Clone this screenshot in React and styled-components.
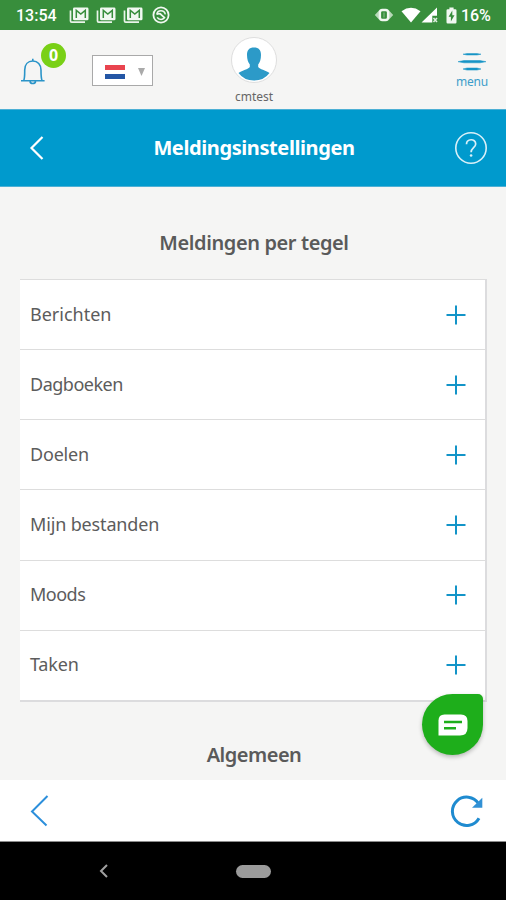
import React from "react";
import styled, { createGlobalStyle } from "styled-components";

const rows = [
    { label: "Berichten", spacing: "0px" },
    { label: "Dagboeken", spacing: "-0.5px" },
    { label: "Doelen", spacing: "-0.2px" },
    { label: "Mijn bestanden", spacing: "-0.15px" },
    { label: "Moods", spacing: "-0.5px" },
    { label: "Taken", spacing: "-0.2px" },
];

const MailIcon = () => (
    <svg width="20" height="17" viewBox="0 0 20 17">
        <path d="M1.5 3.5v10.4q0 1.2 1.2 1.2H16" fill="none" stroke="#e9f4e9" strokeWidth="1.7" />
        <rect x="4" y="0.5" width="15.5" height="12.8" rx="1.4" fill="#f1f8f1" />
        <path d="M7.3 11V3.4l4.5 3.7 4.5-3.7V11" fill="none" stroke="#388e3c" strokeWidth="1.5" />
    </svg>
);

const App = () => {
    return (
        <Screen>
            <GlobalStyle />
            <StatusBar>
                <Clock>13:54</Clock>
                <MailIcons>
                    <MailIcon />
                    <MailIcon />
                    <MailIcon />
                </MailIcons>
                <svg width="18" height="18" viewBox="0 0 18 18">
                    <circle cx="9" cy="9" r="7.6" fill="none" stroke="#f1f8f1" strokeWidth="1.8" />
                    <path d="M4.8 8.6q.4-3.800 4.200-3.800 3.600 0 4.300 3.600M5.200 11.400q1.200 2 3.800 2 2 0 3.200-1.400" fill="none" stroke="#f1f8f1" strokeWidth="1.500" />
                    <path d="M5 8.200q2.600-1.400 4.400.6l3.600 3.400" fill="none" stroke="#f1f8f1" strokeWidth="1.800" />
                </svg>
                <StatusRight>
                    <svg width="20" height="16" viewBox="0 0 20 16">
                        <path d="M5 3.5 0.8 8 5 12.5zM15 3.5 19.2 8 15 12.5z" fill="#b7d9b8" />
                        <rect x="5.9" y="3" width="8.2" height="10" rx="2.5" fill="none" stroke="#f1f8f1" strokeWidth="2.4" />
                        <path d="M10 5.5v5" stroke="#7db680" strokeWidth="1.2" />
                    </svg>
                    <svg width="38" height="16" viewBox="0 0 38 16">
                        <path d="M0.500 4.200Q10 -2.600 19.500 4.200L10 15.400z" fill="#fff" />
                        <path d="M20.500 15.400 36 0.600v8.200h-4.700v6.600z" fill="#fff" />
                        <path d="M32.500 10.900l3.500 4M36 10.900l-3.500 4" stroke="#e0efe0" strokeWidth="1.5" />
                    </svg>
                    <svg width="11" height="17" viewBox="0 0 11 17">
                        <path d="M3.4 0.5h4.2v1.8h1.700q1.200 0 1.200 1.200v11.800q0 1.200-1.200 1.200H1.700q-1.200 0-1.200-1.200V3.500q0-1.200 1.200-1.200h1.700z" fill="#f1f8f1" />
                        <path d="M6.300 3.6 2.600 9.800h2.300v4.600l3.600-6.200H6.300z" fill="#388e3c" />
                    </svg>
                    <Battery>16%</Battery>
                </StatusRight>
            </StatusBar>

            <Header>
                <Side>
                    <Bell>
                        <svg width="26" height="28" viewBox="0 0 26 28">
                            <path d="M3.8 23.2c1-2 .9-5 .9-10.2 0-5.4 3.2-9 8.1-9s8.2 3.6 8.2 9c0 5.2 0 8.2 1 10.2M1 23.700h23.600M10 24.500c.5 2.700 5 2.700 5.600 0M12.800 4V1.700" fill="none" stroke="#2a94c8" strokeWidth="1.600" />
                        </svg>
                        <Badge>0</Badge>
                    </Bell>
                    <Language>
                        <Flag />
                        <svg width="7" height="8" viewBox="0 0 7 8">
                            <path d="M0 0h7L3.500 8z" fill="#aaa" />
                        </svg>
                    </Language>
                </Side>
                <Profile>
                    <Avatar>
                        <svg width="44" height="44" viewBox="0 0 44 44">
                            <path d="M22 9.500c4.800 0 7 2.500 7 7.500 0 4.500-1.200 7.500-2.800 9.500v2.500c1.500 2.300 7.300 3.200 11.300 6q-5.500 7.500-15.500 7.500T6.500 35c4-2.800 9.800-3.700 11.300-6v-2.500c-1.600-2-2.800-5-2.800-9.500 0-5 2.200-7.500 7-7.500z" fill="#2c9ac8" />
                        </svg>
                    </Avatar>
                    <UserName>cmtest</UserName>
                </Profile>
                <Menu>
                    <svg width="28" height="20" viewBox="0 0 28 20">
                        <path d="M5 1.200l4-.6h10l4 .6-4 .8H9zM0 8.700l6-1.200h16l6 1.200-6 1.100H6zM5 16l4-1h10l4 1-4 1.100H9z" fill="#1794c6" stroke="#1794c6" strokeWidth="0.5" />
                    </svg>
                    <MenuText>menu</MenuText>
                </Menu>
            </Header>

            <TitleBar>
                <svg width="16" height="26" viewBox="0 0 16 26">
                    <path d="M13.500 2 2.500 13l11 11" fill="none" stroke="#fff" strokeWidth="2.200" />
                </svg>
                <Title>Meldingsinstellingen</Title>
                <svg width="34" height="34" viewBox="0 0 34 34">
                    <circle cx="17" cy="17" r="15.200" fill="none" stroke="#d9f0f8" strokeWidth="1.600" />
                    <path d="M12.500 13.300c0-6 9.200-6 9.200-.4 0 3.700-4.600 3.800-4.600 8.300" fill="none" stroke="#d9f0f8" strokeWidth="1.700" />
                    <circle cx="17.100" cy="24.500" r="1.300" fill="#d9f0f8" />
                </svg>
            </TitleBar>

            <Content>
                <Heading height="92px" line="76px" spacing="-0.4px">Meldingen per tegel</Heading>
                <Card>
                    {rows.map((row) => (
                        <Row key={row.label}>
                            <RowText spacing={row.spacing}>{row.label}</RowText>
                            <svg width="20" height="20" viewBox="0 0 20 20">
                                <path d="M10 0.500v19M0.500 10h19" stroke="#1294c8" strokeWidth="2" />
                            </svg>
                        </Row>
                    ))}
                </Card>
                <Heading height="106px" line="70px" spacing="-0.5px">Algemeen</Heading>
                <ChatButton>
                    <svg width="30" height="22" viewBox="0 0 30 22">
                        <path d="M6.500 0.500H23q6.500 0 6.500 6.500v7q0 7.500-7.500 7.500H0.500V6.500q0-6 6-6z" fill="#fff" />
                        <path d="M6 8h18M6 14.300h12" stroke="#1eae1b" strokeWidth="2.600" />
                    </svg>
                </ChatButton>
            </Content>

            <ToolBar>
                <svg width="20" height="34" viewBox="0 0 20 34">
                    <path d="M17.500 2 2 17.500l14.500 14" fill="none" stroke="#2c8fdb" strokeWidth="2" />
                </svg>
                <svg width="34" height="34" viewBox="0 0 34 34">
                    <path d="M29 24.200A14.200 14.200 0 1 1 28.500 9.500" fill="none" stroke="#1f8bd0" strokeWidth="3" />
                    <path d="M32.300 3.800v10H22z" fill="#3191d5" />
                </svg>
            </ToolBar>
            <NavBar>
                <svg width="10" height="14" viewBox="0 0 10 14">
                    <path d="M8 1 2 7l6 6" fill="none" stroke="#a0a0a0" strokeWidth="2" />
                </svg>
                <HomePill />
            </NavBar>
        </Screen>
    );
};

const GlobalStyle = createGlobalStyle`
    * {
        box-sizing: border-box;
    }
    body {
        margin: 0;
        font-family: "Noto Sans", sans-serif;
    }
    svg {
        display: block;
        flex-shrink: 0;
    }
`;

const Screen = styled.div`
    width: 506px;
    height: 900px;
    display: flex;
    flex-direction: column;
    overflow: hidden;
    background: #f5f5f4;
`;

const StatusBar = styled.div`
    height: 30px;
    flex-shrink: 0;
    display: flex;
    align-items: center;
    padding: 0 14px 0 16px;
    background: #388e3c;
    color: #ffffff;
    font-family: Roboto, sans-serif;
`;

const Clock = styled.span`
    width: 53px;
    font-size: 16px;
    font-weight: 500;
`;

const MailIcons = styled.div`
    width: 83px;
    display: flex;
    gap: 7px;
`;

const StatusRight = styled.div`
    display: flex;
    align-items: center;
    gap: 7px;
    margin: 0 0 0 auto;
`;

const Battery = styled.span`
    width: 31px;
    margin: 0 0 0 -3px;
    font-size: 16px;
    font-weight: 500;
    letter-spacing: -0.1px;
`;

const Header = styled.div`
    height: 79px;
    flex-shrink: 0;
    display: grid;
    grid-template-columns: 1fr 60px 1fr;
    background: #f5f5f4;
`;

const Side = styled.div`
    display: flex;
    align-items: flex-start;
`;

const Bell = styled.div`
    position: relative;
    width: 72px;
    padding: 27px 0 0 20px;
`;

const Badge = styled.span`
    position: absolute;
    top: 13px;
    left: 41px;
    width: 25px;
    height: 25px;
    border-radius: 50%;
    background: #79d016;
    color: #ffffff;
    font-size: 16px;
    font-weight: 700;
    line-height: 25px;
    text-align: center;
`;

const Language = styled.div`
    width: 61px;
    height: 31px;
    display: flex;
    align-items: center;
    justify-content: space-between;
    margin: 25px 0 0 20px;
    padding: 3px 7px 0 12px;
    border: 1px solid #a9a9a9;
    background: #ffffff;
`;

const Flag = styled.span`
    width: 20px;
    height: 14px;
    background: linear-gradient(#e9444f 0 33%, #ffffff 33% 66%, #2456a5 66%);
`;

const Profile = styled.div`
    display: flex;
    flex-direction: column;
    align-items: center;
    padding: 7px 0 0 2px;
`;

const Avatar = styled.div`
    width: 46px;
    height: 46px;
    border: 1px solid #dedede;
    border-radius: 50%;
    overflow: hidden;
    background: #ffffff;
`;

const UserName = styled.span`
    margin: 5px 0 0 0;
    color: #666666;
    font-size: 12px;
    line-height: 17px;
`;

const Menu = styled.div`
    display: flex;
    flex-direction: column;
    align-items: center;
    margin: 23px 18px 0 auto;
    width: 32px;
`;

const MenuText = styled.span`
    color: #3d9dca;
    font-size: 12px;
    letter-spacing: -0.2px;
    line-height: 18px;
`;

const TitleBar = styled.div`
    height: 78px;
    flex-shrink: 0;
    display: flex;
    align-items: center;
    justify-content: space-between;
    padding: 0 18px 0 29px;
    border-top: 1px solid #4db0d5;
    border-bottom: 1px solid #4db0d5;
    background: #009acd;
`;

const Title = styled.h1`
    margin: 0 0 2px 9px;
    color: #ffffff;
    font-size: 20px;
    font-weight: 700;
    letter-spacing: -0.4px;
    white-space: nowrap;
`;

const Content = styled.div`
    position: relative;
    height: 593px;
    flex-shrink: 0;
    padding: 0 19px 0 20px;
    overflow: hidden;
`;

const Heading = styled.h2`
    height: ${(props) => props.height};
    margin: 0;
    padding: 18px 0 0 1px;
    color: #5a5a5a;
    font-size: 20px;
    font-weight: 600;
    letter-spacing: ${(props) => props.spacing};
    line-height: ${(props) => props.line};
    text-align: center;
`;

const Card = styled.div`
    height: 423px;
    display: grid;
    grid-template-rows: repeat(6, 1fr);
    border-right: 2px solid #dcdcde;
    border-bottom: 2px solid #dcdcde;
    background: #ffffff;
`;

const Row = styled.div`
    display: flex;
    align-items: center;
    justify-content: space-between;
    padding: 0 19px 0 10px;
    border-top: 1px solid #dddddd;
`;

const RowText = styled.span`
    padding: 0 0 2px 0;
    color: #5c5c5c;
    font-size: 18px;
    letter-spacing: ${(props) => props.spacing};
`;

const ChatButton = styled.div`
    position: absolute;
    right: 23px;
    bottom: 25px;
    width: 61px;
    height: 61px;
    display: flex;
    align-items: center;
    justify-content: center;
    border-radius: 50% 5px 50% 50%;
    background: #1eae1b;
    box-shadow: 0 2px 4px rgba(0, 0, 0, 0.25);
`;

const ToolBar = styled.div`
    height: 62px;
    flex-shrink: 0;
    display: flex;
    align-items: center;
    justify-content: space-between;
    padding: 0 22px 0 30px;
    border-bottom: 1px solid #8c8c8c;
    background: #ffffff;
`;

const NavBar = styled.div`
    height: 58px;
    flex-shrink: 0;
    display: grid;
    grid-template-columns: 137px 35px;
    align-items: center;
    padding: 0 0 0 99px;
    background: #000000;
`;

const HomePill = styled.span`
    width: 35px;
    height: 13px;
    border-radius: 7px;
    background: #9b9b9b;
`;

export default App;
